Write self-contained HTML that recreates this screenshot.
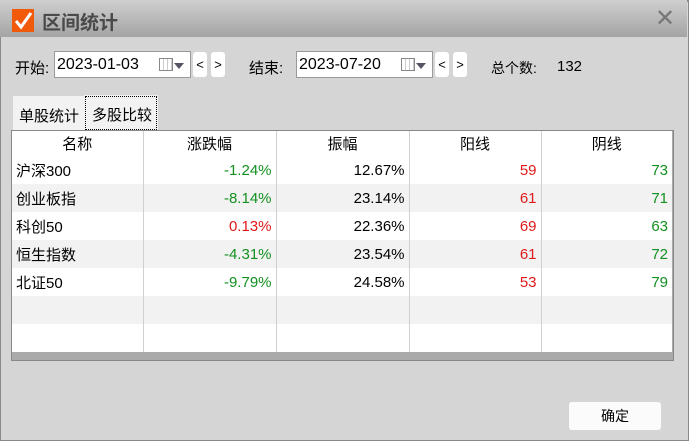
<!DOCTYPE html>
<html><head><meta charset="utf-8"><style>
*{box-sizing:border-box;margin:0;padding:0}
body{width:689px;height:441px;overflow:hidden;background:#d5d5d5;font-family:"Liberation Sans","Noto Sans CJK SC",sans-serif;font-size:14px;color:#000;position:relative}
.win{position:absolute;left:0;top:0;width:689px;height:441px;border:1px solid #8a8a8a;border-top:2px solid #8a8a8a}
.title{position:absolute;left:0;top:0;width:687px;height:37px;background:linear-gradient(#cfcfcf,#a4a4a4)}
.logo{position:absolute;left:12px;top:9px;width:22px;height:23px;background:#f05a0a}
.ttl{position:absolute;left:42px;top:8px;font-size:19px;font-weight:bold;color:#4a4a4a}
.x{position:absolute;left:655px;top:4px;font-size:24px;color:#777}
.abs{position:absolute}
.inp{position:absolute;background:#fff;border:1px solid #9a9a9a;height:27px;font-size:15px;padding:4px 0 0 2px}
.btn{position:absolute;background:#fff;border-radius:3px;width:14px;height:25px;font-size:13px;text-align:center;line-height:25px}
.cal{position:absolute;top:6px;width:14px;height:13px;border:1px solid #888;background:repeating-linear-gradient(90deg,#fff 0 3px,#ccc 3px 4px),#fff}
.tri{position:absolute;top:11px;width:0;height:0;border-left:5px solid transparent;border-right:5px solid transparent;border-top:6px solid #556}
table{position:absolute;left:12px;top:131px;width:660px;border-collapse:collapse;background:#fff;table-layout:fixed}
td{height:28px;border-left:1px solid #d0d0d0;font-size:15px;padding:0 4px;text-align:right;white-space:nowrap}
td:first-child{border-left:none;text-align:left}
tr.h td{height:25px;text-align:center}
tr.g td{background:#f2f2f2}
.r{color:#e0191b}.gr{color:#13901f}
</style></head><body>
<div class="win"></div>
<div class="title"></div>
<div class="logo"><svg width="22" height="23"><path d="M4 12 L9 18 L19 4" stroke="#fff" stroke-width="3" fill="none"/></svg></div>
<div class="ttl">区间统计</div>
<div class="x">✕</div>
<div class="abs" style="left:15px;top:57px;font-size:15px">开始:</div>
<div class="inp" style="left:54px;top:51px;width:137px;font-size:16px">2023-01-03<div class="cal" style="left:104px"></div><div class="tri" style="left:119px"></div></div>
<div class="btn" style="left:193px;top:52px">&lt;</div>
<div class="btn" style="left:211px;top:52px">&gt;</div>
<div class="abs" style="left:249px;top:57px;font-size:15px">结束:</div>
<div class="inp" style="left:296px;top:51px;width:137px;font-size:16px">2023-07-20<div class="cal" style="left:104px"></div><div class="tri" style="left:119px"></div></div>
<div class="btn" style="left:435px;top:52px">&lt;</div>
<div class="btn" style="left:453px;top:52px">&gt;</div>
<div class="abs" style="left:491px;top:58px">总个数:</div>
<div class="abs" style="left:557px;top:58px;font-size:15px">132</div>
<div class="abs" style="left:13px;top:96px;width:71px;height:35px;background:#f2f2f2;padding:9px 0 0 6px;font-size:15px">单股统计</div>
<div class="abs" style="left:84px;top:95px;width:74px;height:36px;background:#f2f2f2;padding:1px"><div style="border:1px dotted #000;height:34px;padding:7px 0 0 6px;font-size:15px">多股比较</div></div>
<div class="abs" style="left:11px;top:130px;width:663px;height:231px;background:#aaa;border:1px solid #888"></div>
<table>
<colgroup><col style="width:131px"><col style="width:133px"><col style="width:133px"><col style="width:132px"><col style="width:131px"></colgroup>
<tr class="h"><td style="text-align:center">名称</td><td>涨跌幅</td><td>振幅</td><td>阳线</td><td>阴线</td></tr>
<tr><td>沪深300</td><td class="gr">-1.24%</td><td>12.67%</td><td class="r">59</td><td class="gr">73</td></tr>
<tr class="g"><td>创业板指</td><td class="gr">-8.14%</td><td>23.14%</td><td class="r">61</td><td class="gr">71</td></tr>
<tr><td>科创50</td><td class="r">0.13%</td><td>22.36%</td><td class="r">69</td><td class="gr">63</td></tr>
<tr class="g"><td>恒生指数</td><td class="gr">-4.31%</td><td>23.54%</td><td class="r">61</td><td class="gr">72</td></tr>
<tr><td>北证50</td><td class="gr">-9.79%</td><td>24.58%</td><td class="r">53</td><td class="gr">79</td></tr>
<tr class="g"><td></td><td></td><td></td><td></td><td></td></tr>
<tr><td></td><td></td><td></td><td></td><td></td></tr>
</table>
<div class="abs" style="left:569px;top:402px;width:92px;height:28px;background:#fbfbfb;border-radius:3px;text-align:center;line-height:28px">确定</div>
</body></html>
